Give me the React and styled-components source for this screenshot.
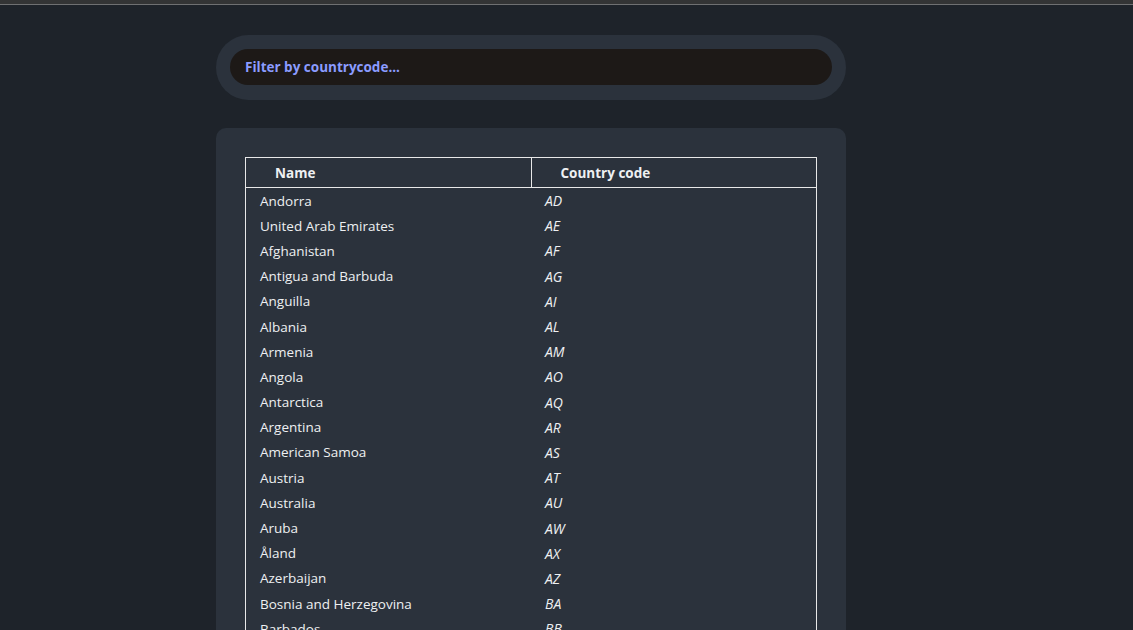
import styled, { createGlobalStyle } from 'styled-components';

const countries = [
  ['Andorra', 'AD'],
  ['United Arab Emirates', 'AE'],
  ['Afghanistan', 'AF'],
  ['Antigua and Barbuda', 'AG'],
  ['Anguilla', 'AI'],
  ['Albania', 'AL'],
  ['Armenia', 'AM'],
  ['Angola', 'AO'],
  ['Antarctica', 'AQ'],
  ['Argentina', 'AR'],
  ['American Samoa', 'AS'],
  ['Austria', 'AT'],
  ['Australia', 'AU'],
  ['Aruba', 'AW'],
  ['Åland', 'AX'],
  ['Azerbaijan', 'AZ'],
  ['Bosnia and Herzegovina', 'BA'],
  ['Barbados', 'BB'],
];

const GlobalStyle = createGlobalStyle`
  html, body {
    margin: 0;
    background: #1e232a;
    font-family: "Open Sans", "Noto Sans", sans-serif;
    color: #eef0f2;
  }
  body {
    height: 630px;
    overflow: hidden;
  }
`;

const TopBar = styled.div`
  height: 4px;
  background: #333435;
  border-bottom: 1px solid #6f7072;
`;

const Column = styled.main`
  width: 630px;
  padding: 30px 0 0 216px;
`;

const SearchWrap = styled.div`
  background: #2b323c;
  border-radius: 33px;
  padding: 14px 14px 15px;
`;

const SearchInput = styled.input`
  display: block;
  width: 100%;
  box-sizing: border-box;
  height: 36px;
  border: none;
  outline: none;
  border-radius: 18px;
  background: #1d1917;
  padding: 0 15px;
  font-family: inherit;
  font-size: 13.5px;
  font-weight: 700;
  color: #eef0f2;
  &::placeholder {
    color: #8b9cff;
  }
`;

const Panel = styled.section`
  margin-top: 28px;
  background: #2b323c;
  border-radius: 10px 10px 0 0;
  padding: 29px 29px 0;
`;

const Table = styled.table`
  width: 100%;
  border-collapse: collapse;
  border: 1px solid #e8e8e8;
  font-size: 13.5px;
`;

const Th = styled.th`
  text-align: left;
  font-weight: 700;
  height: 29px;
  padding: 0 0 0 29px;
  border-bottom: 1px solid #e8e8e8;
  & + & {
    border-left: 1px solid #e8e8e8;
  }
`;

const Td = styled.td`
  height: 25.2px;
  padding: 0 0 0 14px;
  font-style: ${(p) => (p.$code ? 'italic' : 'normal')};
  font-size: ${(p) => (p.$code ? '14px' : 'inherit')};
  vertical-align: middle;
`;

export default function App() {
  return (
    <>
      <GlobalStyle />
      <TopBar />
      <Column>
        <SearchWrap>
          <SearchInput placeholder="Filter by countrycode..." />
        </SearchWrap>
        <Panel>
          <Table>
            <thead>
              <tr>
                <Th style={{ width: '50%' }}>Name</Th>
                <Th>Country code</Th>
              </tr>
            </thead>
            <tbody>
              {countries.map(([name, code]) => (
                <tr key={code}>
                  <Td>{name}</Td>
                  <Td $code>{code}</Td>
                </tr>
              ))}
            </tbody>
          </Table>
        </Panel>
      </Column>
    </>
  );
}
